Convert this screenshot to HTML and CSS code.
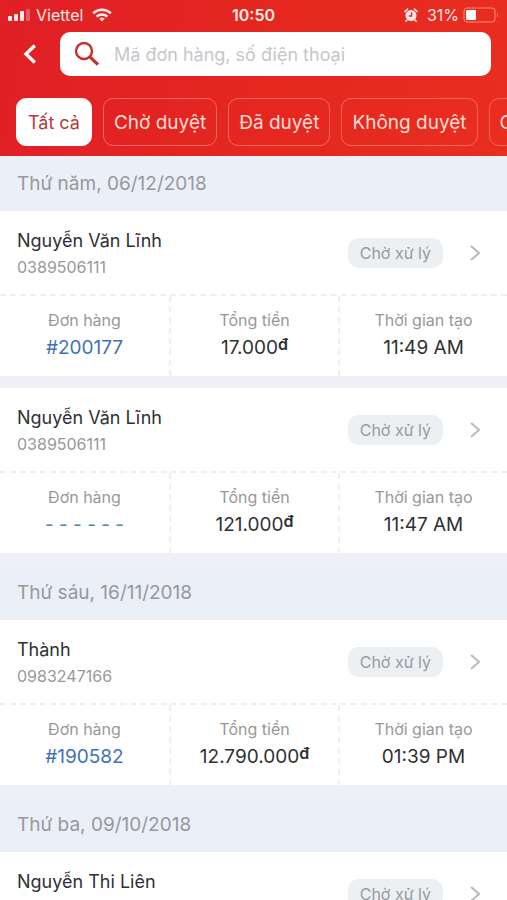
FILE: index.html
```html
<!DOCTYPE html>
<html lang="vi">
<head>
<meta charset="utf-8">
<meta name="viewport" content="width=device-width, initial-scale=1">
<title>Đơn hàng</title>
<link rel="stylesheet" href="styles.css">
</head>
<body>
<div class="app">
  <header class="header">
    <div class="status">
      <div class="status-side">
        <svg class="signal" width="24" height="14" viewBox="0 0 24 14" fill="#ffe9e4" aria-hidden="true"><rect x="0" y="8" width="4" height="5" rx="1"/><rect x="6" y="6" width="4" height="7" rx="1"/><rect x="12" y="3" width="4" height="10" rx="1"/><rect x="18" y="1" width="4" height="12" rx="1" opacity=".3"/></svg>
        <span>Viettel</span>
        <svg class="wifi" width="20" height="14" viewBox="0 0 20 14" fill="none" stroke="#ffe9e4" stroke-width="2.6" aria-hidden="true"><path d="M1.2 5.2C6.2 .6 13.800 .6 18.800 5.200"/><path d="M4.600 8.600C7.600 5.800 12.400 5.800 15.400 8.600"/><path d="M10 13.500L7.200 10.600Q10 8.400 12.800 10.600Z" fill="#ffe9e4" stroke="none"/></svg>
      </div>
      <strong class="clock">10:50</strong>
      <div class="status-side status-right">
        <svg class="alarm" width="14" height="14" viewBox="0 0 14 14" aria-hidden="true"><circle cx="7" cy="7.500" r="5.500" fill="#ffe9e4"/><path d="M.8 3.600L3.600 1M13.200 3.600L10.400 1M3 12L1.800 13.300M11 12L12.200 13.300" stroke="#ffe9e4" stroke-width="1.500" stroke-linecap="round"/><path d="M7.600 4.200V8H4.800" fill="none" stroke="#e52a20" stroke-width="1.300"/></svg>
        <span>31%</span>
        <svg class="battery" width="36" height="16" viewBox="0 0 36 16" aria-hidden="true"><rect x="1" y="1" width="31" height="14" rx="3" fill="none" stroke="#ff8d80"/><rect x="3" y="3" width="10" height="10" rx="1" fill="#fff"/><path d="M34 5.500Q36 8 34 10.500Z" fill="#ff8d80"/></svg>
      </div>
    </div>
    <div class="search-row">
      <button class="back" type="button" aria-label="Quay lại"><svg width="14" height="20" viewBox="0 0 14 20" fill="none" stroke="#fff" stroke-width="3.400"><path d="M11.800 1.500L3 10L11.800 18.500"/></svg></button>
      <label class="search">
        <svg width="26" height="26" viewBox="0 0 26 26" fill="none" stroke="#c5302b" aria-hidden="true"><circle cx="10" cy="10" r="8" stroke-width="2.400"/><path d="M15.600 15.600L24 23.600" stroke-width="3.200"/></svg>
        <input type="search" placeholder="Mã đơn hàng, số điện thoại" aria-label="Mã đơn hàng, số điện thoại">
      </label>
    </div>
    <nav class="tabs">
      <button class="tab active" type="button">Tất cả</button>
      <button class="tab" type="button">Chờ duyệt</button>
      <button class="tab" type="button">Đã duyệt</button>
      <button class="tab" type="button">Không duyệt</button>
      <button class="tab" type="button">C</button>
    </nav>
  </header>
  <main class="list">
    <h2 class="date">Thứ năm, 06/12/2018</h2>
    <article class="card">
      <div class="customer">
        <div class="who"><h3>Nguyễn Văn Lĩnh</h3><p>0389506111</p></div>
        <span class="badge">Chờ xử lý</span>
        <svg class="chevron" width="12" height="16" viewBox="0 0 12 16"><path d="M2 1L10 8L2 15"/></svg>
      </div>
      <dl class="facts">
        <div><dt>Đơn hàng</dt><dd><a href="#200177">#200177</a></dd></div>
        <div><dt>Tổng tiền</dt><dd>17.000<span class="dong">đ</span></dd></div>
        <div><dt>Thời gian tạo</dt><dd>11:49 AM</dd></div>
      </dl>
    </article>
    <article class="card">
      <div class="customer">
        <div class="who"><h3>Nguyễn Văn Lĩnh</h3><p>0389506111</p></div>
        <span class="badge">Chờ xử lý</span>
        <svg class="chevron" width="12" height="16" viewBox="0 0 12 16"><path d="M2 1L10 8L2 15"/></svg>
      </div>
      <dl class="facts">
        <div><dt>Đơn hàng</dt><dd class="pending">- - - - - -</dd></div>
        <div><dt>Tổng tiền</dt><dd>121.000<span class="dong">đ</span></dd></div>
        <div><dt>Thời gian tạo</dt><dd>11:47 AM</dd></div>
      </dl>
    </article>
    <h2 class="date">Thứ sáu, 16/11/2018</h2>
    <article class="card">
      <div class="customer">
        <div class="who"><h3>Thành</h3><p>0983247166</p></div>
        <span class="badge">Chờ xử lý</span>
        <svg class="chevron" width="12" height="16" viewBox="0 0 12 16"><path d="M2 1L10 8L2 15"/></svg>
      </div>
      <dl class="facts">
        <div><dt>Đơn hàng</dt><dd><a href="#190582">#190582</a></dd></div>
        <div><dt>Tổng tiền</dt><dd>12.790.000<span class="dong">đ</span></dd></div>
        <div><dt>Thời gian tạo</dt><dd>01:39 PM</dd></div>
      </dl>
    </article>
    <h2 class="date">Thứ ba, 09/10/2018</h2>
    <article class="card">
      <div class="customer">
        <div class="who"><h3>Nguyễn Thi Liên</h3></div>
        <span class="badge">Chờ xử lý</span>
        <svg class="chevron" width="12" height="16" viewBox="0 0 12 16"><path d="M2 1L10 8L2 15"/></svg>
      </div>
    </article>
  </main>
</div>
</body>
</html>
```
FILE: styles.css
```css
* { box-sizing: border-box; }
body, h2, h3, p, dl, dd { margin: 0; }
body { font-family: Inter, "Noto Sans", sans-serif; color: #303034; background: #fff; }
button, input { font: inherit; }

.app { display: flex; flex-direction: column; height: 100vh; overflow: hidden; }

.header {
  flex: none;
  padding-bottom: 10px;
  color: #ffe9e4;
  background: linear-gradient(100deg, #e01f26, #e42620 45%, #e92e20);
}
.status {
  display: grid;
  grid-template-columns: 1fr auto 1fr;
  align-items: center;
  height: 28px;
  padding: 2px 8px 0;
  font-size: 16px;
}
.status-side { display: flex; align-items: center; }
.signal { margin-right: 4px; }
.wifi { margin-left: 9px; }
.status-right { justify-content: flex-end; }
.alarm { margin-right: 9px; }
.battery { margin-left: 4px; }
.clock { font-weight: 600; }

.search-row { display: flex; align-items: center; padding: 4px 16px 0 0; }
.back {
  display: grid;
  flex: none;
  place-items: center;
  width: 60px;
  height: 44px;
  padding: 0;
  border: 0;
  background: none;
}
.search {
  display: flex;
  flex: 1;
  align-items: center;
  gap: 14px;
  min-width: 0;
  height: 44px;
  padding: 0 14px;
  border-radius: 10px;
  background: #fff;
}
.search svg { flex: none; }
.search input {
  flex: 1;
  min-width: 0;
  padding: 0;
  border: 0;
  outline: 0;
  background: none;
  font-size: 18px;
}
.search input::placeholder { color: #c6c6cb; opacity: 1; }

.tabs { display: flex; gap: 11px; overflow: hidden; padding: 22px 0 0 16px; }
.tab {
  flex: none;
  height: 48px;
  padding: 0 10px;
  border: 1px solid #f4695c;
  border-radius: 10px;
  background: none;
  color: #ffdcd3;
  font-size: 19px;
}
.tab.active {
  padding: 0 11px;
  border-color: #fff;
  background: #fff;
  color: #b83a38;
  font-size: 18px;
}

.list { flex: 1; min-height: 0; overflow: hidden; background: #eef0f5; }
.date {
  padding: 16px 17px 15px;
  background: #ebeff7;
  color: #97989c;
  font-size: 19px;
  font-weight: 400;
  line-height: 24px;
}
.card { background: #fff; }
.card + .card, .card + .date { margin-top: 12px; }

.customer { display: flex; align-items: center; height: 83px; padding: 0 26px 0 17px; }
.who { flex: 1; align-self: flex-start; padding-top: 17px; }
.who h3 { font-size: 18px; font-weight: 400; line-height: 26px; }
.who p { color: #97989c; font-size: 16px; line-height: 26px; }
.badge {
  padding: 0 12px;
  border-radius: 11px;
  background: #edf0f2;
  color: #949ba3;
  font-size: 16px;
  line-height: 30px;
}
.chevron { margin-left: 26px; fill: none; stroke: #b8b9bd; stroke-width: 2; }

.facts {
  display: grid;
  grid-template-columns: repeat(3, 1fr);
  border-top: 2px dashed #efeff1;
  text-align: center;
}
.facts > div { padding: 11px 0 15px; }
.facts > div + div { border-left: 2px dashed #efeff1; }
.facts dt { color: #97989c; font-size: 16px; line-height: 27px; }
.facts dd { font-size: 19px; line-height: 27px; }
.facts a { color: #3f72b8; text-decoration: none; }
.facts .pending { color: #4f86a8; }
.dong { font-size: 16px; font-weight: 600; line-height: 1; vertical-align: 4px; }
```
